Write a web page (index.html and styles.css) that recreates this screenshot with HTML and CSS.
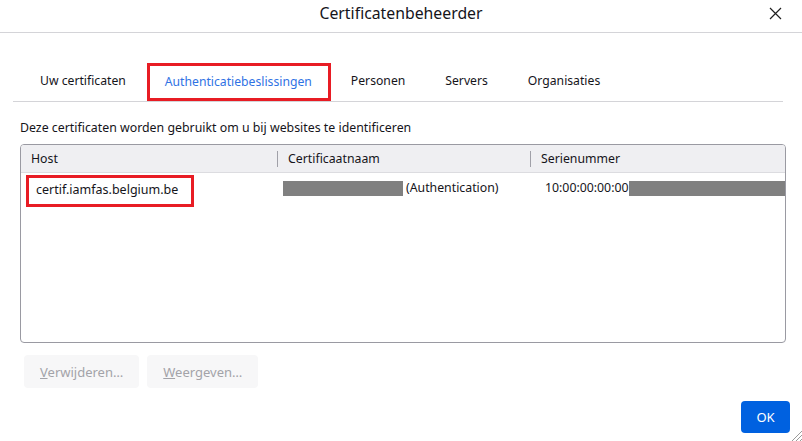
FILE: index.html
```html
<!DOCTYPE html>
<html lang="nl">
<head>
<meta charset="UTF-8">
<title>Certificatenbeheerder</title>
<link rel="stylesheet" href="styles.css">
</head>
<body>

<div class="dialog">
  <!-- titelbalk -->
  <div class="titlebar">
    <span class="title">Certificatenbeheerder</span>
    <svg class="close" width="13" height="13" viewBox="0 0 13 13">
      <path d="M1 1 L12 12 M12 1 L1 12" stroke="#202020" stroke-width="1.2" fill="none"/>
    </svg>
  </div>

  <div class="tabs">
    <div class="tab">Uw certificaten</div>
    <div class="tab active">Authenticatiebeslissingen</div>
    <div class="tab">Personen</div>
    <div class="tab">Servers</div>
    <div class="tab">Organisaties</div>
  </div>

  <p class="desc">Deze certificaten worden gebruikt om u bij websites te identificeren</p>

  <div class="table">
    <div class="thead">
      <div class="col col-host">Host</div>
      <div class="col col-name">Certificaatnaam</div>
      <div class="col col-serial">Serienummer</div>
    </div>
    <div class="row">
      <div class="cell cell-host"><span class="marked">certif.iamfas.belgium.be</span></div>
      <div class="cell cell-name"><span class="redact redact-name"></span>(Authentication)</div>
      <div class="cell cell-serial">10:00:00:00:00<span class="redact redact-serial"></span></div>
    </div>
  </div>

  <div class="actions">
    <button class="btn" disabled><u>V</u>erwijderen…</button>
    <button class="btn" disabled><u>W</u>eergeven…</button>
  </div>

  <div class="footer">
    <button class="btn-ok">OK</button>
  </div>

  <svg class="grip" width="12" height="12" viewBox="0 0 12 12">
    <path d="M12 2 L2 12 M12 6 L6 12 M12 10 L10 12" stroke="#9a9a9a" stroke-width="1" fill="none"/>
  </svg>
</div>

</body>
</html>
```

FILE: styles.css
```css
* { box-sizing: border-box; }
body { margin: 0; background: #fff; font-family: "Noto Sans", "Open Sans", sans-serif; color: #15141a; }
.dialog { position: relative; width: 802px; height: 441px; overflow: hidden; }

.titlebar {
  height: 33px;
  border-bottom: 1px solid #d4d4d8;
  display: flex;
  align-items: center;
  justify-content: center;
  position: relative;
}
.title { font-size: 15.8px; margin-top: -6px; }
.close { position: absolute; right: 20px; top: 7px; }

.tabs {
  display: flex;
  align-items: flex-end;
  margin: 30px 19px 0 13px;
  padding-left: 7px;
  border-bottom: 1px solid #d4d4d8;
  height: 39px;
}
.tab {
  height: 38px;
  line-height: 36px;
  font-size: 12.2px;
  padding: 0 20px;
  white-space: nowrap;
}
.tab.active {
  color: #2f72e4;
  border: 3px solid #e81c24;
  margin-left: 1px;
  padding: 0 16px 0 15px;
  line-height: 32px;
}

.desc { margin: 17px 0 0 20px; font-size: 12.35px; line-height: 18px; }

.table {
  margin: 7px 16px 0 20px;
  height: 199px;
  border: 1px solid #9a9aa2;
  border-radius: 4px;
  overflow: hidden;
  font-size: 12.3px;
}
.thead {
  display: flex;
  height: 28px;
  background: #efeff2;
  border-bottom: 1px solid #dcdce0;
  align-items: center;
}
.col { height: 16px; line-height: 16px; }
.col-host { width: 256px; padding-left: 10px; }
.col-name { width: 253px; padding-left: 10px; border-left: 1px solid #a0a0a8; }
.col-serial { flex: 1; padding-left: 10px; border-left: 1px solid #a0a0a8; }

.row { display: flex; align-items: flex-start; }
.cell { white-space: nowrap; line-height: 18px; margin-top: 6px; display: flex; align-items: center; }
.cell-host { width: 256px; margin-top: 2px; padding-left: 5px; }
.marked {
  display: block;
  width: 168px;
  height: 32px;
  border: 3px solid #e81c24;
  padding-left: 7px;
  line-height: 24px;
  font-size: 12.5px;
}
.cell-name { width: 253px; padding-left: 6px; }
.cell-serial { flex: 1; padding-left: 15px; }
.redact { display: inline-block; height: 15px; background: #808080; }
.redact-name { width: 120px; margin-right: 3px; }
.redact-serial { flex: 1; }

.actions { display: flex; gap: 8px; margin: 12px 0 0 24px; }
.btn {
  font-family: inherit;
  font-size: 13px;
  height: 33px;
  padding: 0 16px;
  border: none;
  border-radius: 4px;
  background: #f7f7f8;
  color: #a3a3a8;
}
.btn u { text-decoration-thickness: 1px; }

.footer { display: flex; justify-content: flex-end; margin: 13px 12px 0 0; }
.btn-ok {
  font-family: inherit;
  font-size: 13px;
  width: 49px;
  height: 32px;
  border: none;
  border-radius: 4px;
  background: #0061e0;
  color: #fff;
}

.grip { position: absolute; right: 0; bottom: 0; }
```
